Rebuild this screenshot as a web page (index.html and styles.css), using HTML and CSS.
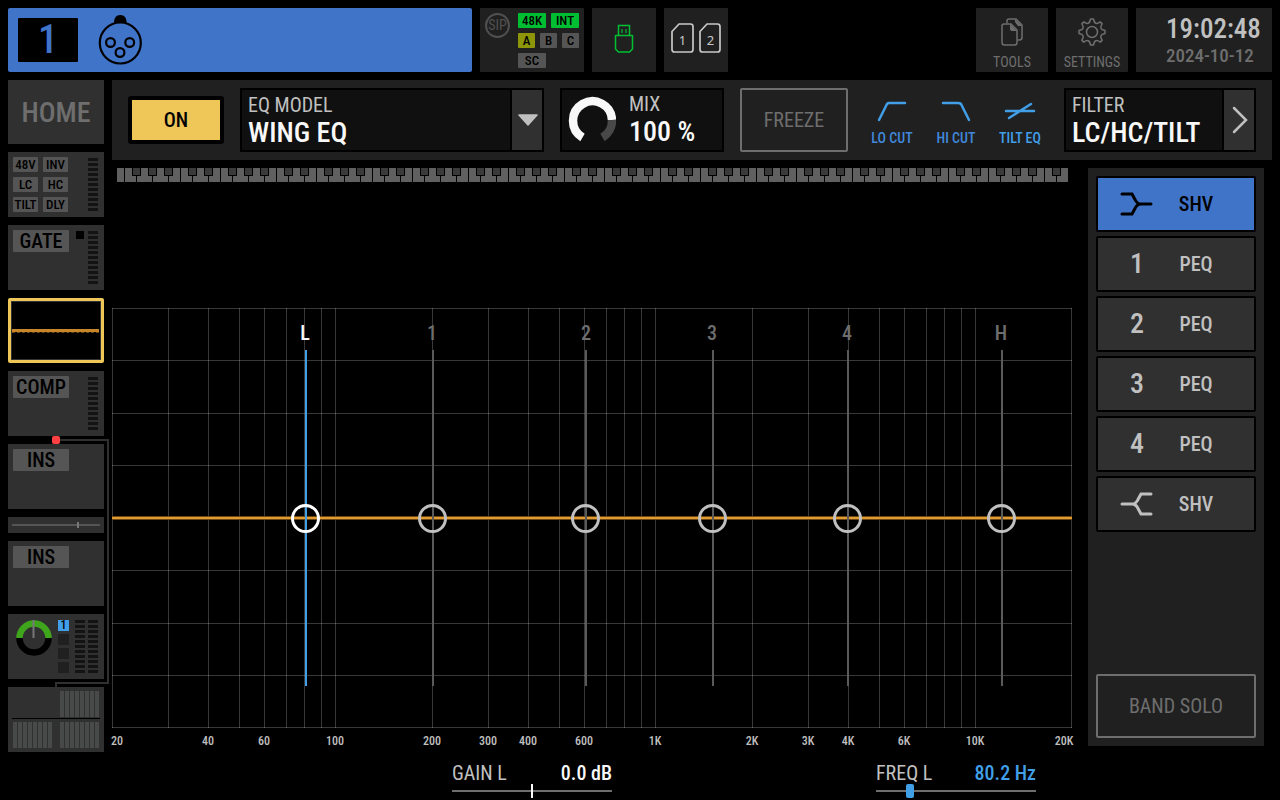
FILE: index.html
```html
<!DOCTYPE html>
<html lang="en">
<head>
<meta charset="utf-8">
<title>Channel 1 – EQ</title>
<link rel="stylesheet" href="styles.css">
</head>
<body>
<header class="topbar">
  <button class="channel" aria-label="Channel 1">
    <span class="channel-number">1</span>
    <svg class="channel-icon" width="46" height="52" viewBox="0 0 46 52" aria-hidden="true">
      <path d="M16 9c0-5 2-8 6.300-8s6.300 3 6.300 8z" fill="#000"/>
      <g fill="none" stroke="#000" stroke-width="2.200">
        <circle cx="22.300" cy="29" r="20.500"/>
        <circle cx="12.500" cy="28.500" r="4.400"/><circle cx="31.700" cy="28.500" r="4.400"/><circle cx="22" cy="38.500" r="4.400"/>
      </g>
    </svg>
  </button>
  <div class="box status">
    <span class="sip">SIP</span>
    <div class="status-rows">
      <div class="status-row"><span class="chip green">48K</span><span class="chip green">INT</span></div>
      <div class="status-row"><span class="chip olive narrow">A</span><span class="chip narrow">B</span><span class="chip narrow">C</span></div>
      <div class="status-row"><span class="chip">SC</span></div>
    </div>
  </div>
  <button class="box square" aria-label="USB">
    <svg width="20" height="32" viewBox="0 0 20 32" fill="none" stroke="#00be32" aria-hidden="true">
      <path d="M4.500 11V1.500H15.500V11" stroke-width="1.500"/>
      <path d="M1.500 11.500H18.500V25L15.500 28H4.500L1.500 25Z" stroke-width="1.500" stroke-linejoin="round"/>
      <path d="M8 5v4M12 5v4" stroke-width="2" opacity=".6"/>
    </svg>
  </button>
  <button class="box square cards" aria-label="SD cards 1 and 2">
    <svg width="50" height="34" viewBox="0 0 50 34" fill="none" stroke="#c8c8c8" stroke-width="1.700" aria-hidden="true">
      <path d="M8 1H19.500Q22 1 22 3.500V26.500Q22 29 19.500 29H3.500Q1 29 1 26.500V8.500Z"/>
      <path d="M36 1H46.500Q49 1 49 3.500V26.500Q49 29 46.500 29H31.500Q29 29 29 26.500V8.500Z"/>
      <g class="card-number"><text x="11.500" y="22">1</text><text x="39.500" y="22">2</text></g>
    </svg>
  </button>
  <button class="box tool push">
    <svg width="22" height="28" viewBox="0 0 22 28" fill="none" stroke="#6e6e6e" stroke-width="1.500" aria-hidden="true">
      <path d="M6 5V3Q6 1 8 1H15L21 7V19.500Q21 22 18.500 22H16.500"/>
      <path d="M14 1L21 8H17L14 4Z" fill="#6e6e6e" stroke="none"/>
      <path d="M3 6H10L16 12V24.500Q16 27 13.500 27H3.500Q1 27 1 24.500V8Q1 6 3 6Z"/>
      <path d="M9 6L16 13H11Q9 13 9 11Z" fill="#6e6e6e" stroke="none"/>
    </svg>
    <span>TOOLS</span>
  </button>
  <button class="box tool">
    <svg width="28" height="28" viewBox="0 0 28 28" fill="none" stroke="#6e6e6e" stroke-width="1.500" stroke-linejoin="round" aria-hidden="true">
      <circle cx="14" cy="14" r="5.500"/>
      <path d="M12.500 1h3q.6 3.500 2.300 4.200 1.700.7 4.400-1.300l2 2q-2 2.700-1.300 4.400.7 1.600 4.100 2.200v3q-3.400.6-4.100 2.200-.7 1.700 1.300 4.400l-2 2q-2.700-2-4.400-1.300-1.700.7-2.300 4.200h-3q-.6-3.500-2.300-4.200-1.700-.7-4.400 1.300l-2-2q2-2.700 1.300-4.400Q4.400 16.100 1 15.500v-3q3.400-.6 4.100-2.200.7-1.700-1.300-4.400l2-2q2.700 2 4.400 1.300 1.700-.7 2.300-4.200z"/>
    </svg>
    <span>SETTINGS</span>
  </button>
  <div class="box clock"><time class="time">19:02:48</time><time class="date">2024-10-12</time></div>
</header>

<div class="workspace">
  <nav class="sidebar" aria-label="Channel sections">
    <button class="tile home">HOME</button>
    <button class="tile">
      <span class="chip-grid"><span class="chip">48V</span><span class="chip">INV</span><span class="chip">LC</span><span class="chip">HC</span><span class="chip">TILT</span><span class="chip">DLY</span></span>
      <span class="meter"></span>
    </button>
    <button class="tile"><span class="tag">GATE</span><span class="lamp"></span><span class="meter"></span></button>
    <button class="tile tile-eq" aria-label="EQ"><span class="mini-curve"></span></button>
    <button class="tile"><span class="tag">COMP</span><span class="meter"></span></button>
    <div class="insert-group">
      <span class="route"></span><span class="route-tail"></span><span class="route-dot"></span>
      <button class="tile"><span class="tag">INS</span></button>
      <button class="tile order" aria-label="Processing order"><span class="order-tick"></span></button>
      <button class="tile"><span class="tag">INS</span></button>
      <button class="tile output" aria-label="Main 1">
        <svg width="36" height="37" viewBox="0 0 36 37" fill="none" stroke-width="6.500" aria-hidden="true">
          <path d="M3.500 19a14.500 14.500 0 0 0 29 0" stroke="#000"/>
          <path d="M3.500 19a14.500 14.500 0 0 1 29 0" stroke="#3fa51c"/>
          <path d="M17.500 1V19" stroke="#777" stroke-width="2"/>
        </svg>
        <span class="mains"><span class="main active">1</span><span class="main"></span><span class="main"></span><span class="main"></span></span>
        <span class="meter left"></span><span class="meter"></span>
      </button>
    </div>
    <button class="tile sends" aria-label="Bus sends">
      <span class="bars top"></span>
      <span class="bars"></span><span class="bars"></span>
    </button>
  </nav>

  <main class="content">
    <section class="toolbar">
      <button class="on">ON</button>
      <div class="field model">
        <div class="field-text"><label for="model">EQ MODEL</label><select id="model"><option>WING EQ</option></select></div>
        <span class="field-button">
          <svg width="22" height="12" viewBox="0 0 22 12" aria-hidden="true"><path d="M2 1H20L11 11Z" fill="#c0c0c0" stroke="#c0c0c0" stroke-width="1.500" stroke-linejoin="round"/></svg>
        </span>
      </div>
      <div class="field mix">
        <svg width="48" height="48" viewBox="0 0 48 48" fill="none" stroke-width="8.500" aria-hidden="true">
          <path d="M14.500 41.500A19.500 19.500 0 1 1 44 24" stroke="#f8f8f8"/>
          <path d="M44 24A19.500 19.500 0 0 1 34.500 41.500" stroke="#484848"/>
        </svg>
        <div class="field-text"><span class="caption">MIX</span><strong>100 %</strong></div>
      </div>
      <button class="outline freeze">FREEZE</button>
      <div class="filters">
        <button class="filter"><svg width="32" height="24" viewBox="0 0 32 24" aria-hidden="true"><path d="M3 20L11 4Q12 3 13 3H29"/></svg><span>LO CUT</span></button>
        <button class="filter"><svg width="32" height="24" viewBox="0 0 32 24" aria-hidden="true"><path d="M3 3H18Q20 3 21 4L29 20"/></svg><span>HI CUT</span></button>
        <button class="filter tilt"><svg width="32" height="24" viewBox="0 0 32 24" aria-hidden="true"><path d="M2 11H30M5 18L27 4"/></svg><span>TILT EQ</span></button>
      </div>
      <button class="field filter-select">
        <span class="field-text"><span class="caption">FILTER</span><strong>LC/HC/TILT</strong></span>
        <span class="field-button"><svg width="18" height="30" viewBox="0 0 18 30" fill="none" aria-hidden="true"><path d="M3 3L15 15L3 27" stroke="#c0c0c0" stroke-width="2.500" stroke-linecap="round"/></svg></span>
      </button>
    </section>

    <div class="editor">
      <section class="graph">
        <svg class="plot" viewBox="112 160 960 592" role="img" aria-label="EQ curve">
          <defs>
            <pattern id="octave" x="124" y="168" width="96" height="14" patternUnits="userSpaceOnUse">
              <rect width="96" height="14" fill="#606060"/>
              <path d="M.5 0V14M12.500 0V14M28.500 0V14M44.500 0V14M56.500 0V14M68.500 0V14M84.500 0V14" stroke="#000"/>
              <path d="M8 0h9v8h-9zM24 0h9v8h-9zM40 0h9v8h-9zM64 0h9v8h-9zM80 0h9v8h-9z" fill="#000"/>
              <path d="M9 0h7v7h-7zM25 0h7v7h-7zM41 0h7v7h-7zM65 0h7v7h-7zM81 0h7v7h-7z" fill="#3a3a3a"/>
            </pattern>
          </defs>
          <rect x="117" y="168" width="951" height="14" fill="url(#octave)"/>
          <path class="grid" d="M112 308.500H1072M112 360.500H1072M112 413.500H1072M112 465.500H1072M112 518.500H1072M112 570.500H1072M112 623.500H1072M112 675.500H1072M112 727.500H1072"/>
          <path class="grid" d="M112.500 308V728M168.500 308V728M208.500 308V728M239.500 308V728M264.500 308V728M286.500 308V728M304.500 308V728M321.500 308V728M335.500 308V728M432.500 308V728M488.500 308V728M528.500 308V728M559.500 308V728M584.500 308V728M606.500 308V728M624.500 308V728M641.500 308V728M655.500 308V728M752.500 308V728M808.500 308V728M848.500 308V728M879.500 308V728M904.500 308V728M926.500 308V728M944.500 308V728M961.500 308V728M975.500 308V728M1071.500 308V728"/>
          <g class="band-name">
            <text class="active" x="305" y="340">L</text><text x="432" y="340">1</text><text x="586" y="340">2</text><text x="712" y="340">3</text><text x="847" y="340">4</text><text x="1001" y="340">H</text>
          </g>
          <path d="M112 518H1072" stroke="#6b4714" stroke-width="4"/>
          <path d="M112 518H1072" stroke="#e09c33" stroke-width="2"/>
          <path d="M433 350V686M586 350V686M713 350V686M848 350V686M1002 350V686" stroke="#5a5a5a" stroke-width="2"/>
          <path d="M306 350V686" stroke="#419fe8" stroke-width="2"/>
          <g class="handles">
            <circle class="active" cx="305.500" cy="518.500" r="13"/><circle cx="432.500" cy="518.500" r="13"/><circle cx="585.500" cy="518.500" r="13"/><circle cx="712.500" cy="518.500" r="13"/><circle cx="847.500" cy="518.500" r="13"/><circle cx="1001.500" cy="518.500" r="13"/>
          </g>
          <g class="axis">
            <text x="117" y="745">20</text><text x="208" y="745">40</text><text x="264" y="745">60</text><text x="335" y="745">100</text><text x="432" y="745">200</text><text x="488" y="745">300</text><text x="528" y="745">400</text><text x="584" y="745">600</text><text x="655" y="745">1K</text><text x="752" y="745">2K</text><text x="808" y="745">3K</text><text x="848" y="745">4K</text><text x="904" y="745">6K</text><text x="975" y="745">10K</text><text x="1064" y="745">20K</text>
          </g>
        </svg>
        <div class="faders">
          <div class="fader"><label for="gain">GAIN L</label><output for="gain">0.0 dB</output><input id="gain" type="range" min="-15" max="15" value="0"></div>
          <div class="fader freq"><label for="freq">FREQ L</label><output for="freq">80.2 Hz</output><input id="freq" type="range" min="0" max="1000" value="198"></div>
        </div>
      </section>

      <aside class="bands">
        <button class="band selected" aria-pressed="true"><svg class="shelf" width="34" height="26" viewBox="0 0 34 26" aria-hidden="true"><path d="M2 3H12L15 8.500Q17 13 21 13H31M2 23H12L15 17.500Q17 13 21 13"/></svg><span>SHV</span></button>
        <button class="band"><span class="band-number">1</span><span>PEQ</span></button>
        <button class="band"><span class="band-number">2</span><span>PEQ</span></button>
        <button class="band"><span class="band-number">3</span><span>PEQ</span></button>
        <button class="band"><span class="band-number">4</span><span>PEQ</span></button>
        <button class="band"><svg class="shelf" width="34" height="26" viewBox="0 0 34 26" aria-hidden="true"><path d="M31 3H21L18 8.500Q16 13 12 13H2M31 23H21L18 17.500Q16 13 12 13"/></svg><span>SHV</span></button>
        <button class="outline solo">BAND SOLO</button>
      </aside>
    </div>
  </main>
</div>
</body>
</html>
```

FILE: styles.css
```css
* { box-sizing: border-box; }

body {
  margin: 0;
  padding: 8px 8px 0;
  min-height: 100vh;
  background: #000;
  color: #c0c0c0;
  font-family: "Roboto Condensed", "Liberation Sans Narrow", "Roboto", sans-serif;
  font-size: 20px;
  line-height: 24px;
}

button, select, input {
  margin: 0;
  padding: 0;
  border: 0;
  background: none;
  color: inherit;
  font: inherit;
}

svg { display: block; flex: none; }

/* Top bar */
.topbar { display: flex; gap: 8px; height: 64px; }

.channel {
  display: flex;
  align-items: center;
  gap: 20px;
  flex: 0 1 464px;
  padding-left: 10px;
  border-radius: 2px;
  background: #4074c8;
}
.channel-number {
  width: 60px;
  border-radius: 1px;
  background: #000;
  color: #4074c8;
  font-size: 40px;
  font-weight: 500;
  line-height: 44px;
  text-align: center;
}

.box { border-radius: 1px; background: #202020; color: #6e6e6e; }
.square { display: flex; align-items: center; justify-content: center; width: 64px; }
.card-number text {
  fill: #c8c8c8;
  stroke: none;
  font-family: "Noto Sans", sans-serif;
  font-size: 13px;
  text-anchor: middle;
}

.status { display: flex; gap: 8px; width: 104px; padding: 5px; }
.sip {
  width: 25px;
  height: 25px;
  border: 2px solid #505050;
  border-radius: 50%;
  color: #505050;
  font-size: 14px;
  line-height: 21px;
  text-align: center;
}
.status-rows { display: flex; flex-direction: column; gap: 5px; }
.status-row { display: flex; gap: 5px; }

.chip {
  display: block;
  width: 28px;
  border-radius: 1px;
  background: #555;
  color: #000;
  font-size: 13px;
  font-weight: 500;
  line-height: 15px;
  text-align: center;
}
.chip.narrow { width: 17px; }
.green { background: #00be32; }
.olive { background: #8c9608; }

.tool {
  display: flex;
  flex-direction: column;
  align-items: center;
  justify-content: space-between;
  width: 72px;
  padding: 10px 0 2px;
  font-size: 14px;
  line-height: 16px;
}
.push { margin-left: auto; }

.clock { display: flex; flex-direction: column; width: 136px; padding: 6px 0 0 30px; }
.time { color: #c0c0c0; font-size: 27px; font-weight: 500; line-height: 30px; }
.date { font-size: 19px; font-weight: 500; line-height: 24px; }

/* Main grid */
.workspace { display: grid; grid-template-columns: 96px 1fr; gap: 8px; margin-top: 8px; }

.sidebar, .insert-group { display: flex; flex-direction: column; gap: 8px; }
.insert-group { position: relative; }

.tile {
  display: flex;
  align-items: flex-start;
  width: 96px;
  height: 65px;
  padding: 5px 6px 5px 5px;
  background: #303030;
  text-align: center;
}
.home { justify-content: center; align-items: center; height: 64px; padding: 2px 0 0; color: #6e6e6e; font-size: 28px; font-weight: 500; }
.chip-grid { display: grid; grid-template-columns: 25px 25px; gap: 5px; }
.chip-grid .chip { width: 25px; }
.tag {
  width: 56px;
  border-radius: 1px;
  background: #555;
  color: #000;
  font-size: 20px;
  font-weight: 500;
  line-height: 22px;
}
.lamp { width: 8px; height: 8px; margin: 1px 0 0 7px; background: #000; }
.meter {
  width: 10px;
  height: 53px;
  margin: 1px 0 0 auto;
  background: repeating-linear-gradient(#131313 0 3px, transparent 3px 5px);
}
.meter.left { margin-left: 6px; }

.tile-eq { align-items: center; padding: 0; border: 3px solid #efc658; border-radius: 2px; background: #000; outline: 1px solid #333; outline-offset: -4px; }
.mini-curve { width: 100%; height: 4px; margin: 0 2px 0 1px; border-top: 3px solid #c8862a; border-bottom: 1px dashed #6b4714; }

.order { position: relative; height: 16px; background: linear-gradient(#555, #555) center / 88px 2px no-repeat #303030; }
.order-tick { position: absolute; top: 5px; right: 25px; width: 2px; height: 6px; background: #777; }

.output { padding-left: 8px; }
.mains { display: flex; flex-direction: column; gap: 3px; margin: 1px 0 0 6px; }
.main { width: 11px; height: 11px; background: #202020; }
.main.active { background: #419fe8; color: #000; font-size: 12px; font-weight: 500; line-height: 11px; }

.sends {
  display: grid;
  grid-template-columns: 39px 39px;
  grid-template-rows: 26px 26px;
  gap: 5px 8px;
  padding: 4px 5px;
  background: linear-gradient(#000, #000) center 31px / 88px 1px no-repeat #303030;
}
.bars { height: 26px; background: repeating-linear-gradient(90deg, #484a49 0 4px, transparent 4px 5px); }
.bars.top { grid-column: 2; }

.route { position: absolute; top: -5px; right: -5px; bottom: -5px; left: 48px; border: 2px solid #303030; border-left: 0; pointer-events: none; }
.route-tail { position: absolute; bottom: -8px; left: 47px; width: 2px; height: 5px; background: #303030; }
.route-dot { position: absolute; top: -8px; left: 44px; width: 8px; height: 8px; border-radius: 2px; background: #ff4040; }

/* Toolbar */
.content { min-width: 0; }
.toolbar { display: flex; align-items: center; height: 80px; padding: 8px 16px; background: #202020; }
.on {
  width: 96px;
  height: 48px;
  margin-right: 16px;
  border: 4px solid #000;
  border-radius: 3px;
  background: #efc658;
  color: #000;
  font-weight: 500;
}
.field {
  display: flex;
  height: 64px;
  border: 2px solid #000;
  background: #101010;
  text-align: left;
}
.field-text { display: flex; flex: 1; flex-direction: column; min-width: 0; padding: 3px 6px 0; color: #c0c0c0; }
.field-text strong, .field-text select { color: #f8f8f8; font-size: 28px; font-weight: 500; line-height: 32px; white-space: nowrap; }
.field-text select { appearance: none; width: 100%; height: 32px; }
.field-button { display: flex; align-items: center; justify-content: center; width: 32px; border-left: 2px solid #000; background: #303030; }
.field-button svg { margin-left: 1px; }
.model { flex: 0 1 304px; margin-right: 16px; }
.mix { width: 164px; margin-right: 16px; padding-left: 6px; }
.mix svg { align-self: center; }
.mix .field-text { padding: 2px 0 0 13px; }
.outline { border: 2px solid #6e6e6e; border-radius: 2px; color: #6e6e6e; }
.freeze { width: 108px; height: 64px; margin-right: 12px; }
.filters { display: flex; margin-right: auto; color: #4088dc; }
.filter { display: flex; flex-direction: column; align-items: center; gap: 6px; width: 64px; padding-top: 6px; font-size: 14px; font-weight: 500; line-height: 16px; }
.filter svg { fill: none; stroke: #419fe8; stroke-width: 2.500; stroke-linecap: round; }
.tilt { color: #419fe8; }
.filter-select { width: 192px; }

/* Editor */
.editor { display: grid; grid-template-columns: 1fr 176px; column-gap: 16px; align-items: start; padding-right: 8px; }
.plot { width: 100%; height: auto; overflow: visible; }
.plot text { text-anchor: middle; }
.grid { fill: none; stroke: #fff; stroke-opacity: .22; }
.band-name { fill: #6e6e6e; font-size: 20px; font-weight: 500; }
.band-name .active { fill: #f8f8f8; }
.handles { fill: none; stroke: #c0c0c0; stroke-width: 3; }
.handles .active { stroke: #fff; }
.axis { fill: #c0c0c0; font-size: 12px; font-weight: 500; }

.faders { display: flex; justify-content: flex-end; gap: 264px; padding: 9px 36px 0 0; }
.fader { display: grid; grid-template-columns: auto auto; justify-content: space-between; width: 160px; }
.fader output { color: #f8f8f8; font-weight: 500; text-align: right; }
.fader input { grid-column: 1 / 3; appearance: none; width: 160px; height: 14px; margin-top: -1px; background: linear-gradient(#6e6e6e, #6e6e6e) center / 100% 2px no-repeat; }
.fader input::-webkit-slider-thumb { appearance: none; width: 2px; height: 14px; background: #f8f8f8; }
.fader.freq output { color: #419fe8; }
.fader.freq input::-webkit-slider-thumb { width: 8px; border-radius: 2px; background: #419fe8; }

.bands { display: flex; flex-direction: column; gap: 4px; height: 578px; margin-top: 8px; padding: 8px; background: #202020; }
.band {
  display: grid;
  grid-template-columns: 78px 40px;
  align-items: center;
  justify-items: center;
  height: 56px;
  border: 2px solid #000;
  border-radius: 2px;
  background: #303030;
}
.band { font-weight: 500; }
.band-number { font-size: 28px; }
.shelf { fill: none; stroke: currentColor; stroke-width: 3; stroke-linecap: round; }
.selected { background: #4074c8; color: #000; }
.solo { height: 64px; margin-top: auto; }
```
